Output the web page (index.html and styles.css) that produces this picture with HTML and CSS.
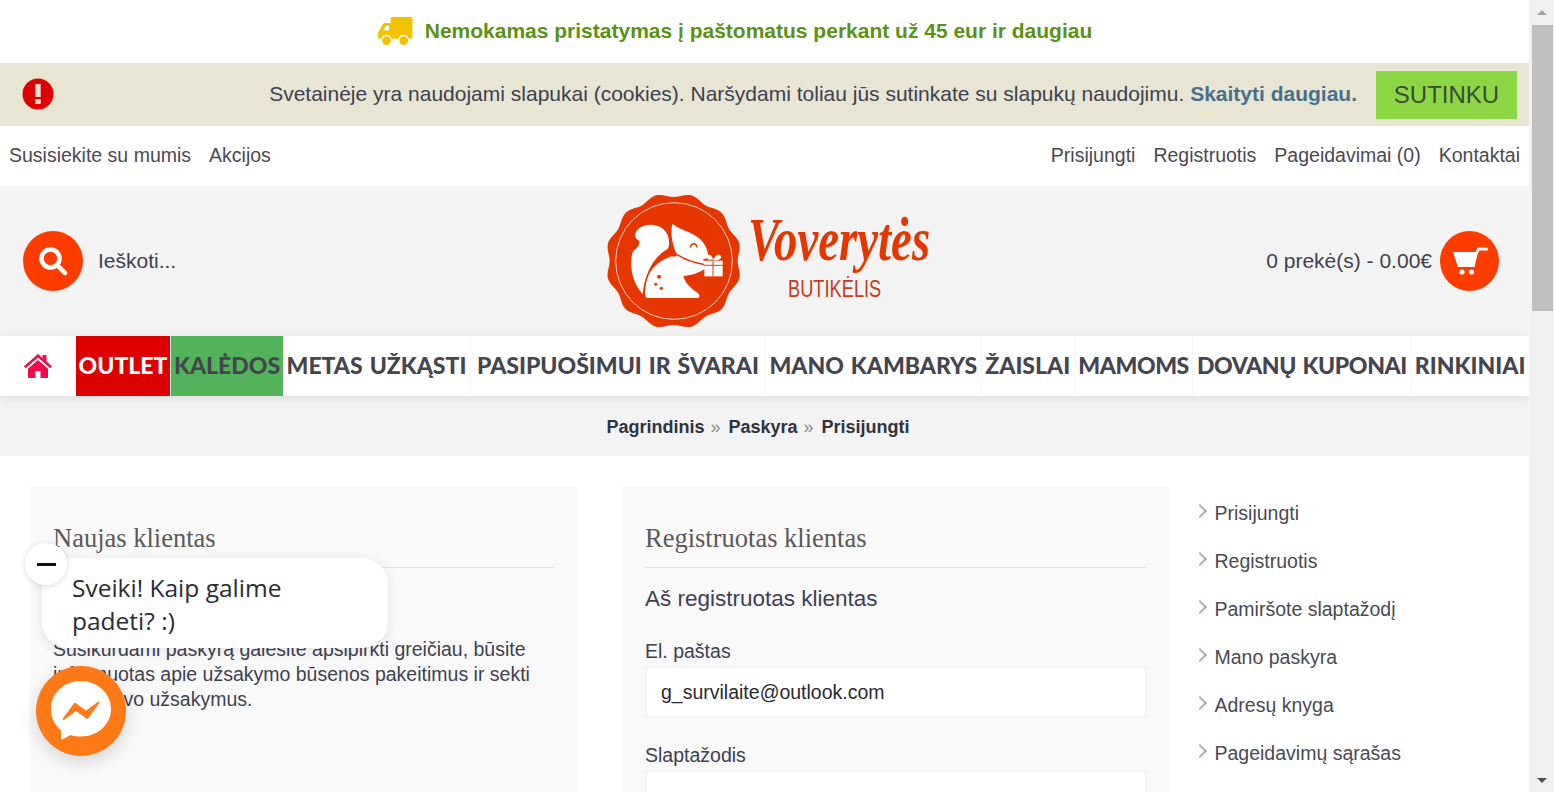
FILE: index.html
```html
<!DOCTYPE html>
<html lang="lt">
<head>
    <meta charset="UTF-8">
    <meta name="viewport" content="width=device-width, initial-scale=1.0">
    <title>Prisijungti</title>
    <link rel="stylesheet" href="styles.css">
</head>
<body>
    <div class="page">
        <div class="promo">
            <svg class="truck" viewBox="0 0 36 30">
                <path fill="#f2c200" d="M13 1.500C13 .7 13.700 0 14.500 0H34c.8 0 1.500.7 1.500 1.500V21c0 .8-.7 1.500-1.500 1.500h-2.200a5.500 5.500 0 0 0-10.600 0h-7.400a5.500 5.500 0 0 0-10.600 0H1.500C.7 22.500 0 21.800 0 21v-5l5-8.500C5.500 6.700 6.300 6.200 7.200 6.200H13z"/>
                <path fill="#fff" d="M5.500 14l3-5h3v5z"/>
                <circle fill="#f2c200" cx="8.700" cy="24.500" r="4.500"/>
                <circle fill="#f2c200" cx="26.500" cy="24.500" r="4.500"/>
            </svg>
            <span>Nemokamas pristatymas į paštomatus perkant už 45 eur ir daugiau</span>
        </div>

        <div class="cookie">
            <svg class="cookie-icon" viewBox="0 0 32 32">
                <circle cx="16" cy="16" r="15.500" fill="#dd0000"/>
                <rect x="13.300" y="6" width="5.400" height="13" fill="#f7dcd6"/>
                <rect x="13.300" y="21" width="5.400" height="5" fill="#f7dcd6"/>
            </svg>
            <p class="cookie-text">Svetainėje yra naudojami slapukai (cookies). Naršydami toliau jūs sutinkate su slapukų naudojimu. <a href="#">Skaityti daugiau.</a></p>
            <button class="cookie-btn">SUTINKU</button>
        </div>

        <div class="toplinks">
            <div class="toplinks-group">
                <a href="#">Susisiekite su mumis</a>
                <a href="#">Akcijos</a>
            </div>
            <div class="toplinks-group">
                <a href="#">Prisijungti</a>
                <a href="#">Registruotis</a>
                <a href="#">Pageidavimai (0)</a>
                <a href="#">Kontaktai</a>
            </div>
        </div>

        <header class="header">
            <div class="search">
                <span class="round-btn">
                    <svg viewBox="0 0 32 32" width="32" height="32">
                        <circle cx="13.500" cy="13.500" r="9" fill="none" stroke="#fff" stroke-width="4.500"/>
                        <path d="M20.500 20.500l7.500 7.500" stroke="#fff" stroke-width="4.500" stroke-linecap="round"/>
                    </svg>
                </span>
                <span>Ieškoti...</span>
            </div>
            <svg class="logo" viewBox="0 0 1080 450">
                <g fill="#e53600" transform="translate(251 225)">
                    <circle r="190"/>
                    <path d="M0 0L-49.700 -185.500C-35 -189 -18 -204 0 -204C18 -204 35 -189 49.700 -185.500Z" transform="rotate(15)"/>
                    <path d="M0 0L-49.700 -185.500C-35 -189 -18 -204 0 -204C18 -204 35 -189 49.700 -185.500Z" transform="rotate(45)"/>
                    <path d="M0 0L-49.700 -185.500C-35 -189 -18 -204 0 -204C18 -204 35 -189 49.700 -185.500Z" transform="rotate(75)"/>
                    <path d="M0 0L-49.700 -185.500C-35 -189 -18 -204 0 -204C18 -204 35 -189 49.700 -185.500Z" transform="rotate(105)"/>
                    <path d="M0 0L-49.700 -185.500C-35 -189 -18 -204 0 -204C18 -204 35 -189 49.700 -185.500Z" transform="rotate(135)"/>
                    <path d="M0 0L-49.700 -185.500C-35 -189 -18 -204 0 -204C18 -204 35 -189 49.700 -185.500Z" transform="rotate(165)"/>
                    <path d="M0 0L-49.700 -185.500C-35 -189 -18 -204 0 -204C18 -204 35 -189 49.700 -185.500Z" transform="rotate(195)"/>
                    <path d="M0 0L-49.700 -185.500C-35 -189 -18 -204 0 -204C18 -204 35 -189 49.700 -185.500Z" transform="rotate(225)"/>
                    <path d="M0 0L-49.700 -185.500C-35 -189 -18 -204 0 -204C18 -204 35 -189 49.700 -185.500Z" transform="rotate(255)"/>
                    <path d="M0 0L-49.700 -185.500C-35 -189 -18 -204 0 -204C18 -204 35 -189 49.700 -185.500Z" transform="rotate(285)"/>
                    <path d="M0 0L-49.700 -185.500C-35 -189 -18 -204 0 -204C18 -204 35 -189 49.700 -185.500Z" transform="rotate(315)"/>
                    <path d="M0 0L-49.700 -185.500C-35 -189 -18 -204 0 -204C18 -204 35 -189 49.700 -185.500Z" transform="rotate(345)"/>
                </g>
                <circle cx="252" cy="225" r="175" fill="none" stroke="#f2d5cc" stroke-width="3"/>
                <!-- voverė -->
                <path fill="#fff" d="M158 324C128 292 118 245 126 205C130 190 146 186 148 172C150 160 140 165 135 150C135 128 160 115 185 116C215 118 235 135 237 165C238 178 236 184 232 190C195 210 165 255 158 324Z"/>
                <path fill="#fff" d="M247 113C270 132 300 135 325 155C345 170 352 190 354 204C356 214 348 220 338 220C340 225 347 226 348 232L345 248C325 262 300 268 280 270C285 290 300 305 322 320C332 326 330 336 318 336H175C165 336 163 328 166 315C168 270 185 235 238 213C248 208 258 216 262 206C248 185 240 140 247 113Z"/>
                <path fill="none" stroke="#e53600" stroke-width="4" d="M262 206C285 222 310 230 345 236"/>
                <path fill="none" stroke="#e53600" stroke-width="4" stroke-linecap="round" d="M301 183C305 170 318 170 321 183"/>
                <circle fill="#e53600" cx="207" cy="272" r="6"/>
                <circle fill="#e53600" cx="197" cy="295" r="4.500"/>
                <circle fill="#e53600" cx="214" cy="307" r="5"/>
                <!-- dovana -->
                <rect x="343" y="224" width="55" height="47" fill="#fff"/>
                <path fill="none" stroke="#e53600" stroke-width="3" d="M343 238H398M369 224V271"/>
                <path fill="#fff" d="M368 220C350 225 342 210 356 206C364 205 368 214 370 220C374 212 380 203 390 207C400 214 388 226 370 222Z"/>
                <text class="logo-title" transform="translate(474 222) scale(0.76 1)">Voverytės</text>
                <text class="logo-sub" transform="translate(594 332) scale(0.74 1)">BUTIKĖLIS</text>
            </svg>
            <div class="cart">
                <span>0 prekė(s) - 0.00€</span>
                <span class="round-btn">
                    <svg viewBox="0 0 36 30" width="36" height="30">
                        <path fill="#fff" d="M1 6h25l-3.500 15H6z"/>
                        <path d="M25 6.500l1.500-3.500h8" fill="none" stroke="#fff" stroke-width="3" stroke-linecap="round"/>
                        <circle fill="#fff" cx="10" cy="26" r="2.600"/>
                        <circle fill="#fff" cx="19.500" cy="26" r="2.600"/>
                    </svg>
                </span>
            </div>
        </header>

        <nav class="menu">
            <a class="menu-home" href="#">
                <svg viewBox="0 0 28 24" width="28" height="24">
                    <path fill="#ee0a4b" d="M14 0L0 12.300l1.700 1.900L14 3.400l12.300 10.800 1.700-1.900L22.500 7.400V1h-4v2.900z"/>
                    <path fill="#ee0a4b" d="M14 6L4 14.800V24h7.500v-7h5v7H24v-9.200z"/>
                </svg>
            </a>
            <a class="menu-item menu-red" href="#">OUTLET</a>
            <a class="menu-item menu-green" href="#">KALĖDOS</a>
            <a class="menu-item" href="#">METAS UŽKĄSTI</a>
            <a class="menu-item menu-wide" href="#">PASIPUOŠIMUI IR ŠVARAI</a>
            <a class="menu-item" href="#">MANO KAMBARYS</a>
            <a class="menu-item" href="#">ŽAISLAI</a>
            <a class="menu-item menu-tight" href="#">MAMOMS</a>
            <a class="menu-item menu-tight" href="#">DOVANŲ KUPONAI</a>
            <a class="menu-item" href="#">RINKINIAI</a>
        </nav>

        <div class="breadcrumb">
            <a href="#">Pagrindinis</a><span>»</span>
            <a href="#">Paskyra</a><span>»</span>
            <a href="#">Prisijungti</a>
        </div>

        <main class="content">
            <section class="panel">
                <h2>Naujas klientas</h2>
                <p>Susikurdami paskyrą galėsite apsipirkti greičiau, būsite informuotas apie užsakymo būsenos pakeitimus ir sekti visus savo užsakymus.</p>
            </section>
            <section class="panel">
                <h2>Registruotas klientas</h2>
                <h3>Aš registruotas klientas</h3>
                <label class="field-label">El. paštas</label>
                <input class="field" type="text" value="g_survilaite@outlook.com">
                <label class="field-label">Slaptažodis</label>
                <input class="field" type="password">
            </section>
            <aside class="sidebar">
                <a href="#">Prisijungti</a>
                <a href="#">Registruotis</a>
                <a href="#">Pamiršote slaptažodį</a>
                <a href="#">Mano paskyra</a>
                <a href="#">Adresų knyga</a>
                <a href="#">Pageidavimų sąrašas</a>
            </aside>
        </main>
    </div>

    <div class="scrollbar">
        <span class="arrow-up"></span>
        <span class="thumb"></span>
        <span class="arrow-down"></span>
    </div>

    <!-- pokalbio valdiklis -->
    <div class="chat-bubble">Sveiki! Kaip galime padeti? :)</div>
    <button class="chat-close"><span></span></button>
    <div class="chat-btn">
        <svg viewBox="0 0 90 90" width="90" height="90">
            <path fill="#fff" d="M45 15C28 15 15 27 15 43c0 9 4 16.500 10 21.500V74l9.500-5c3.300 1 6.800 1.500 10.500 1.500 17 0 30-12.500 30-27.500S62 15 45 15z"/>
            <path fill="#ff7a16" stroke="#ff7a16" stroke-width="2" stroke-linejoin="round" d="M27.700 53L39 37.700 50 45.700 62.300 36.700 51.300 52 40 43.700z"/>
        </svg>
    </div>
</body>
</html>
```

FILE: styles.css
```css
*{
    box-sizing: border-box;
}
html, body{
    margin: 0;
    height: 100%;
    overflow: hidden;
}
body{
    display: flex;
    font-family: "Liberation Sans", Arial, sans-serif;
    font-size: 19.5px;
    color: #3e4150;
    background: #fff;
}
a{
    color: inherit;
    text-decoration: none;
}
.page{
    flex: 1;
    min-width: 0;
    height: 792px;
    overflow: hidden;
}

.promo{
    height: 63px;
    display: flex;
    align-items: center;
    justify-content: center;
    gap: 12px;
    padding: 0 59px 1px 0;
    font-size: 21px;
    font-weight: bold;
    color: #5a9216;
}
.truck{
    width: 35px;
    height: 29px;
}

.cookie{
    height: 63px;
    display: flex;
    align-items: center;
    padding: 0 12px 0 22px;
    background: #e8e5d3;
}
.cookie-icon{
    width: 32px;
    height: 32px;
    margin-bottom: 1px;
}
.cookie-text{
    flex: 1;
    margin: 0 19px 1px 0;
    text-align: right;
    font-size: 21px;
}
.cookie-text a{
    font-weight: bold;
    color: #45718f;
}
.cookie-btn{
    width: 141px;
    height: 48px;
    margin-top: 1px;
    border: 0;
    background: #8cd646;
    color: #3a4a35;
    font-family: inherit;
    font-size: 24px;
}

.toplinks{
    height: 60px;
    display: flex;
    align-items: center;
    justify-content: space-between;
    padding: 0 9px 2px;
    color: #4a4a52;
}
.toplinks-group{
    display: flex;
    gap: 18px;
}

.header{
    height: 150px;
    display: grid;
    grid-template-columns: 1fr auto 1fr;
    align-items: center;
    padding: 0 30px 0 23px;
    background: #f3f3f3;
    font-size: 21px;
}
.search, .cart{
    display: flex;
    align-items: center;
}
.search{
    gap: 15px;
}
.cart{
    justify-content: flex-end;
    gap: 8px;
}
.round-btn{
    width: 60px;
    height: 60px;
    display: flex;
    align-items: center;
    justify-content: center;
    border-radius: 50%;
    background: #ff3c00;
}
.cart .round-btn{
    width: 59px;
}
.logo{
    width: 360px;
    height: 150px;
    margin-left: 17px;
}
.logo-title{
    font-family: "Liberation Serif", serif;
    font-style: italic;
    font-weight: bold;
    font-size: 185px;
    fill: #e53600;
}
.logo-sub{
    font-family: "Liberation Sans", sans-serif;
    font-size: 74px;
    fill: #c9391a;
}

.menu{
    position: relative;
    height: 60px;
    display: flex;
    align-items: stretch;
    background: #fff;
    box-shadow: 0 3px 10px rgba(0,0,0,0.08);
    font-family: Lato, "Noto Sans", sans-serif;
    font-weight: 900;
    font-size: 23px;
    color: #45454f;
}
.menu-home{
    flex: none;
    width: 76px;
    display: flex;
    align-items: center;
    justify-content: center;
}
.menu-item{
    flex: none;
    display: flex;
    align-items: center;
    padding: 0 3.5px 3px;
    border-right: 1px solid #f6f6f6;
    white-space: nowrap;
    word-spacing: 1.5px;
}
.menu-wide{
    padding: 0 6px 3px;
}
.menu-tight{
    letter-spacing: -0.4px;
}
.menu-red, .menu-green{
    justify-content: center;
    padding: 0 0 3px;
    border: 0;
}
.menu-red{
    width: 94px;
    background: #dd0000;
    color: #fff;
    margin-right: 1px;
}
.menu-green{
    width: 112px;
    background: #52b35a;
}

.breadcrumb{
    height: 60px;
    display: flex;
    align-items: center;
    justify-content: center;
    gap: 6px;
    padding: 3px 13px 0 0;
    background: #f3f3f3;
    font-size: 18px;
    font-weight: bold;
    color: #2f3240;
}
.breadcrumb span{
    margin-right: 2px;
    font-weight: normal;
    color: #8a8a8a;
}

.content{
    display: flex;
    padding: 31px 0 0 30px;
}
.panel{
    width: 547px;
    height: 500px;
    margin-right: 45px;
    padding: 35px 23px 0;
    background: #f9f9f9;
}
.panel:nth-child(2){
    margin-right: 29px;
}
.panel h2{
    margin: 0;
    padding-bottom: 12px;
    border-bottom: 1px solid #e2e2da;
    font-family: "Liberation Serif", serif;
    font-weight: normal;
    font-size: 26.500px;
    line-height: 33px;
    color: #5a5a5a;
}
.panel h3{
    margin: 16px 0 15px;
    font-weight: normal;
    font-size: 22.500px;
    line-height: 30px;
}
.panel p{
    margin: 69px 0 0;
    line-height: 25px;
}
.field-label{
    display: block;
    margin-top: 25px;
    line-height: 24px;
}
.field{
    display: block;
    width: calc(100% + 1px);
    height: 52px;
    margin: 3px 0 25px;
    padding: 0 14px;
    border: 2px solid #f3f3f3;
    background: #fff;
    font-family: inherit;
    font-size: 19.5px;
    color: #2a2a30;
}

.sidebar{
    display: flex;
    flex-direction: column;
    gap: 24px;
    padding-top: 14px;
    color: #4a4a52;
}
.sidebar a{
    position: relative;
    padding-left: 16.5px;
    line-height: 24px;
}
.sidebar a::before{
    content: "";
    position: absolute;
    left: -3px;
    top: 5px;
    width: 8px;
    height: 8px;
    border-top: 2px solid #9fb0b8;
    border-right: 2px solid #9fb0b8;
    transform: rotate(45deg);
}

.scrollbar{
    flex: 0 0 25px;
    height: 792px;
    display: flex;
    flex-direction: column;
    align-items: center;
    background: #f1f1f1;
    border-left: 1px solid #f6f6f6;
}
.arrow-up, .arrow-down{
    width: 0;
    height: 0;
    border-left: 5px solid transparent;
    border-right: 5px solid transparent;
}
.arrow-up{
    margin: 10px 0;
    border-bottom: 5px solid #a3a3a3;
}
.thumb{
    width: 21px;
    height: 286px;
    background: #bfbfbf;
}
.arrow-down{
    margin-top: auto;
    margin-bottom: 9px;
    border-top: 5px solid #505050;
}

.chat-bubble{
    position: absolute;
    left: 42px;
    top: 558px;
    width: 346px;
    height: 90px;
    padding: 13px 30px;
    border-radius: 26px;
    background: #fff;
    box-shadow: 0 2px 12px rgba(0,0,0,0.10);
    font-family: "Open Sans", sans-serif;
    font-size: 24.500px;
    line-height: 33px;
    color: #2a2d33;
}
.chat-close{
    position: absolute;
    left: 25px;
    top: 543px;
    width: 42px;
    height: 42px;
    display: flex;
    align-items: center;
    justify-content: center;
    padding: 0;
    border: 0;
    border-radius: 50%;
    background: #fff;
    box-shadow: 0 1px 6px rgba(0,0,0,0.15);
}
.chat-close span{
    width: 19px;
    height: 3px;
    background: #111;
}
.chat-btn{
    position: absolute;
    left: 36px;
    top: 666px;
    width: 90px;
    height: 90px;
    border-radius: 50%;
    background: #ff7a16;
    box-shadow: 0 6px 18px rgba(0,0,0,0.15);
}
```
